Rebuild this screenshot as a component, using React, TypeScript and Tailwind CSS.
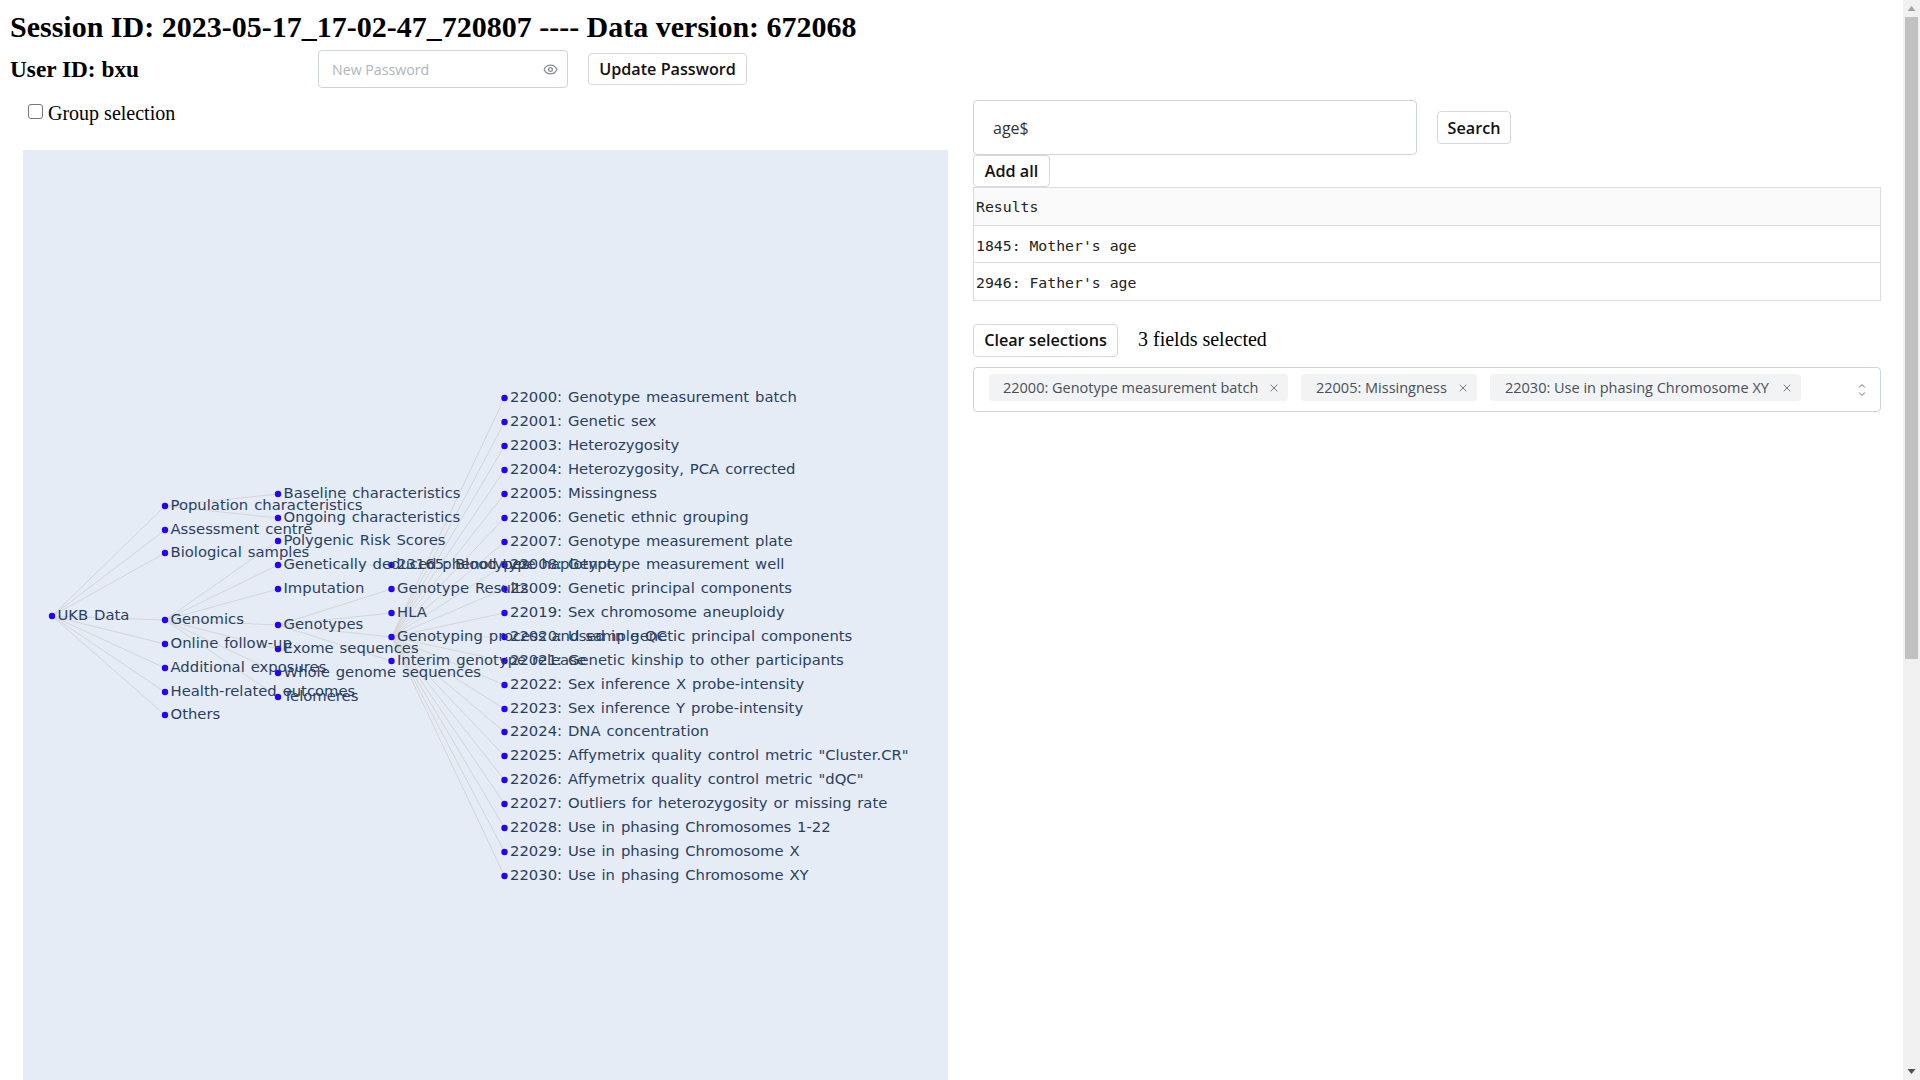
import React from "react";
import { Eye, X } from "lucide-react";

const L4 = [
  "22000: Genotype measurement batch", "22001: Genetic sex", "22003: Heterozygosity", "22004: Heterozygosity, PCA corrected",
  "22005: Missingness", "22006: Genetic ethnic grouping", "22007: Genotype measurement plate", "22008: Genotype measurement well",
  "22009: Genetic principal components", "22019: Sex chromosome aneuploidy", "22020: Used in genetic principal components",
  "22021: Genetic kinship to other participants", "22022: Sex inference X probe-intensity", "22023: Sex inference Y probe-intensity",
  "22024: DNA concentration", '22025: Affymetrix quality control metric "Cluster.CR"', '22026: Affymetrix quality control metric "dQC"',
  "22027: Outliers for heterozygosity or missing rate", "22028: Use in phasing Chromosomes 1-22", "22029: Use in phasing Chromosome X",
  "22030: Use in phasing Chromosome XY",
];
const L4Y = [398, 422, 446, 470, 494, 518, 542, 565, 589, 613, 637, 661, 685, 709, 732, 756, 780, 804, 828, 852, 876];

type N = { t: string; x: number; y: number; p?: [number, number] };
const X0 = 52, X1 = 165, X2 = 278, X3 = 391.5, X4 = 504.5;
const root: [number, number] = [X0, 616];
const pop: [number, number] = [X1, 506];
const gen: [number, number] = [X1, 620];
const gended: [number, number] = [X2, 565];
const gts: [number, number] = [X2, 625];
const gproc: [number, number] = [X3, 637];
const nodes: N[] = [
  { t: "UKB Data", x: X0, y: 616 },
  { t: "Population characteristics", x: X1, y: 506, p: root },
  { t: "Assessment centre", x: X1, y: 530, p: root },
  { t: "Biological samples", x: X1, y: 553, p: root },
  { t: "Genomics", x: X1, y: 620, p: root },
  { t: "Online follow-up", x: X1, y: 644, p: root },
  { t: "Additional exposures", x: X1, y: 668, p: root },
  { t: "Health-related outcomes", x: X1, y: 692, p: root },
  { t: "Others", x: X1, y: 715, p: root },
  { t: "Baseline characteristics", x: X2, y: 494, p: pop },
  { t: "Ongoing characteristics", x: X2, y: 518, p: pop },
  { t: "Polygenic Risk Scores", x: X2, y: 541, p: gen },
  { t: "Genetically deduced phenotypes", x: X2, y: 565, p: gen },
  { t: "Imputation", x: X2, y: 589, p: gen },
  { t: "Genotypes", x: X2, y: 625, p: gen },
  { t: "Exome sequences", x: X2, y: 649, p: gen },
  { t: "Whole genome sequences", x: X2, y: 673, p: gen },
  { t: "Telomeres", x: X2, y: 697, p: gen },
  { t: "23165: Blood type haplotype", x: X3, y: 565, p: gended },
  { t: "Genotype Results", x: X3, y: 589, p: gts },
  { t: "HLA", x: X3, y: 613, p: gts },
  { t: "Genotyping process and sample QC", x: X3, y: 637, p: gts },
  { t: "Interim genotype release", x: X3, y: 661, p: gts },
  ...L4.map((t, i) => ({ t, x: X4, y: L4Y[i], p: gproc })),
];

function Tree() {
  return (
    <svg width="925" height="930" viewBox="23 150 925 930" className="block">
      {nodes.filter((n) => n.p).map((n, i) => (
        <line key={i} x1={n.p![0]} y1={n.p![1]} x2={n.x} y2={n.y} stroke="#d6d6d6" strokeWidth="1" />
      ))}
      {nodes.map((n, i) => <circle key={i} cx={n.x} cy={n.y} r="3.2" fill="#2400ff" />)}
      {nodes.map((n, i) => (
        <text key={i} x={n.x + 5.5} y={n.y + 4} fill="#2a3f5f" fontSize="14.8" wordSpacing="1.2" fontFamily="'DejaVu Sans', sans-serif">{n.t}</text>
      ))}
    </svg>
  );
}

const btn = "flex items-center justify-center bg-white border border-[#d5d9de] rounded-[4px] font-['Open_Sans',sans-serif] font-semibold text-[16.2px] text-[#111]";

function Chip({ t, w, pl }: { t: string; w: string; pl: string }) {
  return (
    <div className={`${w} ${pl} h-[27px] flex items-center justify-between pr-[8px] bg-[#f1f3f5] rounded-[4px] text-[14.5px] text-[#495057]`}>
      <span className="whitespace-nowrap">{t}</span>
      <X size={12} strokeWidth={1.5} color="#495057" />
    </div>
  );
}

export default function App() {
  return (
    <div className="flex h-screen overflow-hidden bg-white font-['Liberation_Serif',serif] text-black">
      <main className="flex-1 min-w-0 overflow-hidden">
        <h1 className="h-[50px] pl-[10px] pt-[2px] flex items-center text-[30px] font-bold whitespace-nowrap">Session ID: 2023-05-17_17-02-47_720807 ---- Data version: 672068</h1>
        <div className="flex items-center h-[38px] pl-[10px]">
          <h3 className="w-[308px] text-[23.3px] font-bold">User ID: bxu</h3>
          <div className="w-[250px] h-[38px] flex items-center justify-between pl-[13px] pr-[9px] border border-[#ced4da] rounded-[4px] font-['Open_Sans',sans-serif] text-[14.2px] text-[#adb5bd]">
            <span className="pt-[1px]">New Password</span>
            <Eye size={15} color="#868e96" />
          </div>
          <button className={`${btn} ml-[20px] w-[159px] h-[32px] pt-[1px]`}>Update Password</button>
        </div>
        <div className="flex">
          <div className="w-[948px] pl-[23px] shrink-0">
            <label className="h-[62px] pl-[5px] pt-[16px] flex items-start text-[20px]">
              <input type="checkbox" className="w-[15px] h-[15px] mr-[5px] appearance-none bg-white border border-[#767676] rounded-[3px]" />
              <span className="leading-[18px]">Group selection</span>
            </label>
            <div className="bg-[#e5ecf6] w-[925px] h-[930px] overflow-hidden"><Tree /></div>
          </div>
          <div className="ml-[25px] w-[908px] pt-[12px]">
            <div className="flex items-center">
              <div className="w-[444px] h-[55px] flex items-center pl-[19px] pt-[1px] border border-[#ced4da] rounded-[4px] font-['Open_Sans',sans-serif] text-[16px] text-[#333]">age$</div>
              <button className={`${btn} ml-[20px] w-[74px] h-[33px] pt-[2px]`}>Search</button>
            </div>
            <button className={`${btn} w-[77px] h-[32px] pt-[1px]`}>Add all</button>
            <div className="border border-[#dddddd] font-['DejaVu_Sans_Mono',monospace] text-[14.8px] text-[#222]">
              <div className="h-[38px] flex items-center pl-[2px] pt-[1px] bg-[#fafafa] border-b border-[#dddddd]">Results</div>
              <div className="h-[37px] flex items-center pl-[2px] pt-[4px] border-b border-[#dddddd]">1845: Mother's age</div>
              <div className="h-[37px] flex items-center pl-[2px] pt-[3px]">2946: Father's age</div>
            </div>
            <div className="flex items-center mt-[23px]">
              <button className={`${btn} w-[145px] h-[33px]`}>Clear selections</button>
              <span className="ml-[20px] text-[20px] leading-[24px] mb-[4px]">3 fields selected</span>
            </div>
            <div className="mt-[10px] h-[45px] flex items-center pl-[15px] pr-[11px] border border-[#ced4da] rounded-[4px] font-['Open_Sans',sans-serif]">
              <div className="flex gap-[13px] -mt-[4px]">
                <Chip t="22000: Genotype measurement batch" w="w-[299px]" pl="pl-[14px]" />
                <Chip t="22005: Missingness" w="w-[176px]" pl="pl-[15px]" />
                <Chip t="22030: Use in phasing Chromosome XY" w="w-[311px]" pl="pl-[15px]" />
              </div>
              <svg className="ml-auto" width="14" height="18" viewBox="0 0 14 18" fill="none" stroke="#6b7280" strokeWidth="1">
                <path d="M4 6.5 L7 3.5 L10 6.5 M4 11.5 L7 14.5 L10 11.5" />
              </svg>
            </div>
          </div>
        </div>
      </main>
      <div className="w-[17px] h-screen shrink-0 bg-[#f1f1f1] flex flex-col items-center">
        <svg width="17" height="17" viewBox="0 0 17 17" className="shrink-0"><path d="M4.5 11 L8.5 6 L12.5 11 Z" fill="#a3a3a3" /></svg>
        <div className="w-[13px] h-[642px] bg-[#c1c1c1]" />
        <svg width="17" height="17" viewBox="0 0 17 17" className="mt-auto shrink-0"><path d="M4.5 6 L8.5 11 L12.5 6 Z" fill="#505050" /></svg>
      </div>
    </div>
  );
}
